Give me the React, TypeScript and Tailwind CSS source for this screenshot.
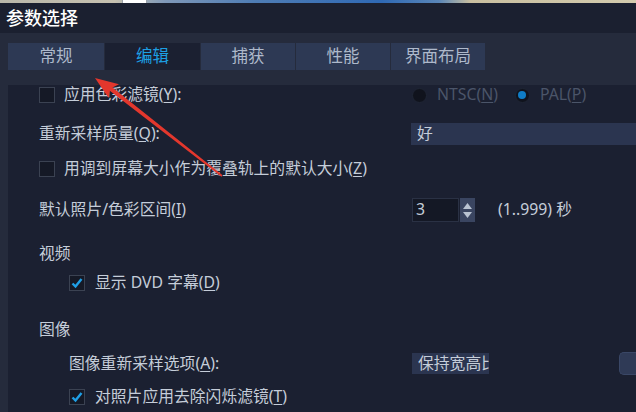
import React from "react";

const font = "font-['Noto_Sans','Noto_Sans_CJK_SC',sans-serif]";

function Key({ k }: { k: string }) {
    return <span className="underline underline-offset-[2px] decoration-1">{k}</span>;
}

function CheckBox({ checked }: { checked?: boolean }) {
    return (
        <div className="w-[16px] h-[16px] shrink-0 border border-[#3b4252] bg-[#151926] flex items-center justify-center">
            {checked && (
                <svg width="12" height="12" viewBox="0 0 12 12">
                    <path d="M1.5 6.5 L4.5 9.5 L10.5 2" fill="none" stroke="#1f9fe6" strokeWidth="2.4" />
                </svg>
            )}
        </div>
    );
}

function Radio({ on }: { on?: boolean }) {
    return (
        <div className="w-[15px] h-[15px] rounded-full bg-[#10131d] border border-[#1f2535] flex items-center justify-center">
            {on && <div className="w-[8px] h-[8px] rounded-full bg-[#0f7cc6]" />}
        </div>
    );
}

const tabs = [
    { t: "常规", w: "w-[96px]" },
    { t: "编辑", w: "w-[95px]", active: true },
    { t: "捕获", w: "w-[94px]" },
    { t: "性能", w: "w-[94px]" },
    { t: "界面布局", w: "w-[94px]" },
];

export default function App() {
    return (
        <div className={`relative w-[636px] h-[412px] overflow-hidden bg-[#252b3c] ${font}`}>

            {/* desktop behind the dialog */}
            <div className="flex h-[3px] bg-[linear-gradient(90deg,#b9b7aa_0%,#c6c1b0_18%,#7f98b8_26%,#4f7db5_40%,#2f69b4_60%,#5a86b8_69%,#c9bfa0_74%,#d3cbae_100%)]">
                <div className="w-[122px]" />
                <div className="w-[25px] bg-white border-x border-[#9aa0a8]" />
            </div>

            <div className="h-[30px] bg-[#1b2030] pl-[6px] flex items-center">
                <span className="text-[18px] text-white font-medium leading-none">参数选择</span>
            </div>

            <div className="pl-[8px] pt-[10px]">

                <div className="flex gap-px h-[27px]">
                    {tabs.map((tab) => (
                        <div
                            key={tab.t}
                            className={`${tab.w} flex items-center justify-center text-[16.5px] leading-none ${tab.active ? "bg-[#1b2031] text-[#1d9fe3]" : "bg-[#2d3954] text-[#aeb9cb]"}`}
                        >
                            {tab.t}
                        </div>
                    ))}
                </div>

                <div className="h-[342px] bg-[#1b2031] pl-[31px] text-[15.8px] leading-none text-[#c5cdd9]">

                    <div className="flex items-center h-[20px] mt-[15px]">
                        <div className="w-[373px] flex items-center">
                            <CheckBox />
                            <span className="ml-[9px]">应用色彩滤镜(<Key k="Y" />):</span>
                        </div>
                        <Radio />
                        <span className="ml-[10px] text-[#4b5569]">NTSC(<Key k="N" />)</span>
                        <div className="ml-[17px]"><Radio on /></div>
                        <span className="ml-[10px] text-[#4b5569]">PAL(<Key k="P" />)</span>
                    </div>

                    <div className="flex items-center h-[22px] mt-[18px]">
                        <span className="w-[372px]">重新采样质量(<Key k="Q" />):</span>
                        <div className="flex-1 h-[22px] bg-[#2b3550] pl-[6px] flex items-center">好</div>
                    </div>

                    <div className="flex items-center h-[20px] mt-[14px]">
                        <CheckBox />
                        <span className="ml-[9px]">用调到屏幕大小作为覆叠轨上的默认大小(<Key k="Z" />)</span>
                    </div>

                    <div className="flex items-center h-[24px] mt-[19px]">
                        <span className="w-[373px]">默认照片/色彩区间(<Key k="I" />)</span>
                        <div className="w-[47px] h-[24px] bg-[#141825] border border-[#2a3144] pl-[3px] flex items-center">3</div>
                        <div className="ml-px w-[15px] h-[24px] bg-[#3a4561] flex flex-col items-center justify-center gap-[3px]">
                            <svg width="9" height="6" viewBox="0 0 9 6"><path d="M4.5 0 L9 6 L0 6 Z" fill="#b9c3d2" /></svg>
                            <svg width="9" height="6" viewBox="0 0 9 6"><path d="M0 0 L9 0 L4.5 6 Z" fill="#b9c3d2" /></svg>
                        </div>
                        <span className="ml-[23px]">(1..999) 秒</span>
                    </div>

                    <div className="flex items-center h-[20px] mt-[22px]">视频</div>

                    <div className="flex items-center h-[20px] mt-[9px] pl-[30px]">
                        <CheckBox checked />
                        <span className="ml-[10px]">显示 DVD 字幕(<Key k="D" />)</span>
                    </div>

                    <div className="flex items-center h-[20px] mt-[27px]">图像</div>

                    <div className="flex items-center h-[23px] mt-[12px] pl-[30px]">
                        <span className="w-[343px]">图像重新采样选项(<Key k="A" />):</span>
                        <div className="w-[77px] h-[21px] bg-[#2b3550] pl-[6px] flex items-center overflow-hidden whitespace-nowrap">保持宽高比</div>
                        <div className="ml-auto w-[17px] h-[23px] rounded-l-[5px] bg-[#2f3a56] border border-r-0 border-[#3a4766]" />
                    </div>

                    <div className="flex items-center h-[20px] mt-[12px] pl-[30px]">
                        <CheckBox checked />
                        <span className="ml-[10px]">对照片应用去除闪烁滤镜(<Key k="T" />)</span>
                    </div>
                </div>
            </div>

            {/* red annotation arrow */}
            <svg className="absolute inset-0 pointer-events-none" width="636" height="412" viewBox="0 0 636 412">
                <polygon
                    points="95,78 119,84.3 112.5,87.4 222.6,175.2 221.4,176.8 109.8,90.8 108.6,98"
                    fill="#e3372d"
                />
            </svg>
        </div>
    );
}
